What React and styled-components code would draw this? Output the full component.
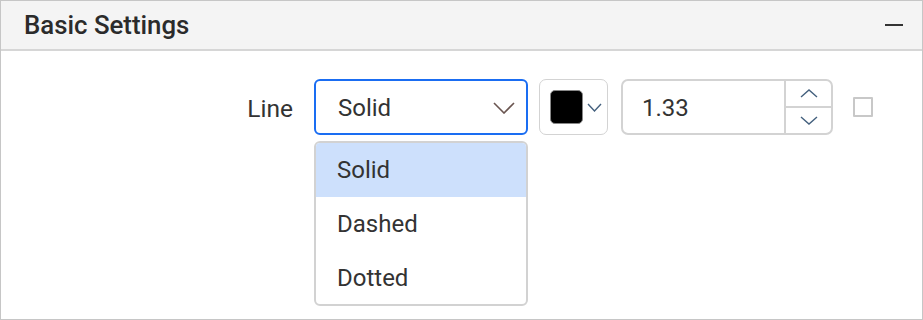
import React from "react";
import styled, { createGlobalStyle } from "styled-components";

const Global = createGlobalStyle`
  html, body { margin: 0; padding: 0; background: #fff; }
  body { font-family: Roboto, "Noto Sans", sans-serif; color: #333; }
  * { box-sizing: border-box; }
`;

const Panel = styled.div`
  width: 923px;
  height: 320px;
  border: 1px solid #c6c6c6;
  display: flex;
  flex-direction: column;
  background: #fff;
`;

const Header = styled.div`
  height: 50px;
  flex: none;
  background: #f4f4f4;
  border-bottom: 2px solid #d6d6d6;
  display: flex;
  align-items: center;
  justify-content: space-between;
  padding: 0 19px 0 23px;
`;

const Title = styled.div`
  font-size: 25.8px;
  font-weight: 500;
  color: #2b2b2b;
`;

const Collapse = styled.span`
  width: 18px;
  height: 2px;
  background: #333;
`;

const Body = styled.div`
  flex: 1;
  padding: 28px 0 0 0;
`;

const Row = styled.div`
  display: flex;
  align-items: center;
`;

const Label = styled.div`
  width: 292px;
  text-align: right;
  font-size: 24.5px;
  color: #333;
  margin-right: 21px;
  padding-top: 2px;
`;

const SelectWrap = styled.div`
  position: relative;
  width: 214px;
  height: 56px;
  margin-right: 11px;
`;

const Select = styled.div`
  height: 100%;
  border: 2px solid #1a6df2;
  border-radius: 6px;
  display: flex;
  align-items: center;
  justify-content: space-between;
  padding: 2px 11px 0 22px;
  font-size: 24px;
  color: #333;
`;

const Popup = styled.ul`
  position: absolute;
  left: 0;
  top: 62px;
  width: 214px;
  margin: 0;
  padding: 0;
  list-style: none;
  background: #fff;
  border: 2px solid #d2d2d2;
  border-radius: 6px;
  overflow: hidden;
`;

const Item = styled.li`
  height: ${(p) => (p.$last ? 53 : 54)}px;
  display: flex;
  align-items: center;
  padding-left: 21px;
  font-size: 24px;
  color: #333;
  background: ${(p) => (p.$active ? "#cde0fc" : "transparent")};
`;

const ColorBox = styled.div`
  width: 69px;
  height: 56px;
  border: 1px solid #d3d3d3;
  border-radius: 7px;
  display: flex;
  align-items: center;
  padding-left: 10px;
  gap: 4px;
  margin-right: 13px;
`;

const Swatch = styled.span`
  width: 33px;
  height: 34px;
  background: #000;
  border: 1px solid #888;
  border-radius: 5px;
`;

const Numeric = styled.div`
  width: 212px;
  height: 56px;
  border: 2px solid #d3d3d3;
  border-radius: 7px;
  display: flex;
  margin-right: 20px;
`;

const NumInput = styled.div`
  flex: 1;
  display: flex;
  align-items: center;
  padding: 2px 0 0 19px;
  font-size: 24px;
  color: #333;
`;

const Spin = styled.div`
  width: 47px;
  border-left: 2px solid #d3d3d3;
  display: flex;
  flex-direction: column;
`;

const SpinBtn = styled.div`
  flex: 1;
  display: flex;
  align-items: center;
  justify-content: center;
  border-top: ${(p) => (p.$bottom ? "2px solid #d3d3d3" : "none")};
`;

const Check = styled.span`
  width: 20px;
  height: 20px;
  border: 2px solid #c8c8c8;
  border-radius: 1px;
`;

const Chevron = ({ w, h, color, up, sw = 1.6 }) => (
  <svg width={w} height={h} viewBox={`0 0 ${w} ${h}`} fill="none">
    <polyline
      points={
        up
          ? `1,${h - 1} ${w / 2},1 ${w - 1},${h - 1}`
          : `1,1 ${w / 2},${h - 1} ${w - 1},1`
      }
      stroke={color}
      strokeWidth={sw}
    />
  </svg>
);

export default function App() {
  return (
    <>
      <Global />
      <Panel>
        <Header>
          <Title>Basic Settings</Title>
          <Collapse />
        </Header>
        <Body>
          <Row>
            <Label>Line</Label>
            <SelectWrap>
              <Select>
                <span>Solid</span>
                <Chevron w={22} h={12} color="#6a5550" sw={1.6} />
              </Select>
              <Popup>
                <Item $active>Solid</Item>
                <Item>Dashed</Item>
                <Item $last>Dotted</Item>
              </Popup>
            </SelectWrap>
            <ColorBox>
              <Swatch />
              <Chevron w={15} h={9} color="#44607e" sw={1.4} />
            </ColorBox>
            <Numeric>
              <NumInput>1.33</NumInput>
              <Spin>
                <SpinBtn>
                  <Chevron w={18} h={9} color="#44607e" up sw={1.4} />
                </SpinBtn>
                <SpinBtn $bottom>
                  <Chevron w={18} h={9} color="#44607e" sw={1.4} />
                </SpinBtn>
              </Spin>
            </Numeric>
            <Check />
          </Row>
        </Body>
      </Panel>
    </>
  );
}
